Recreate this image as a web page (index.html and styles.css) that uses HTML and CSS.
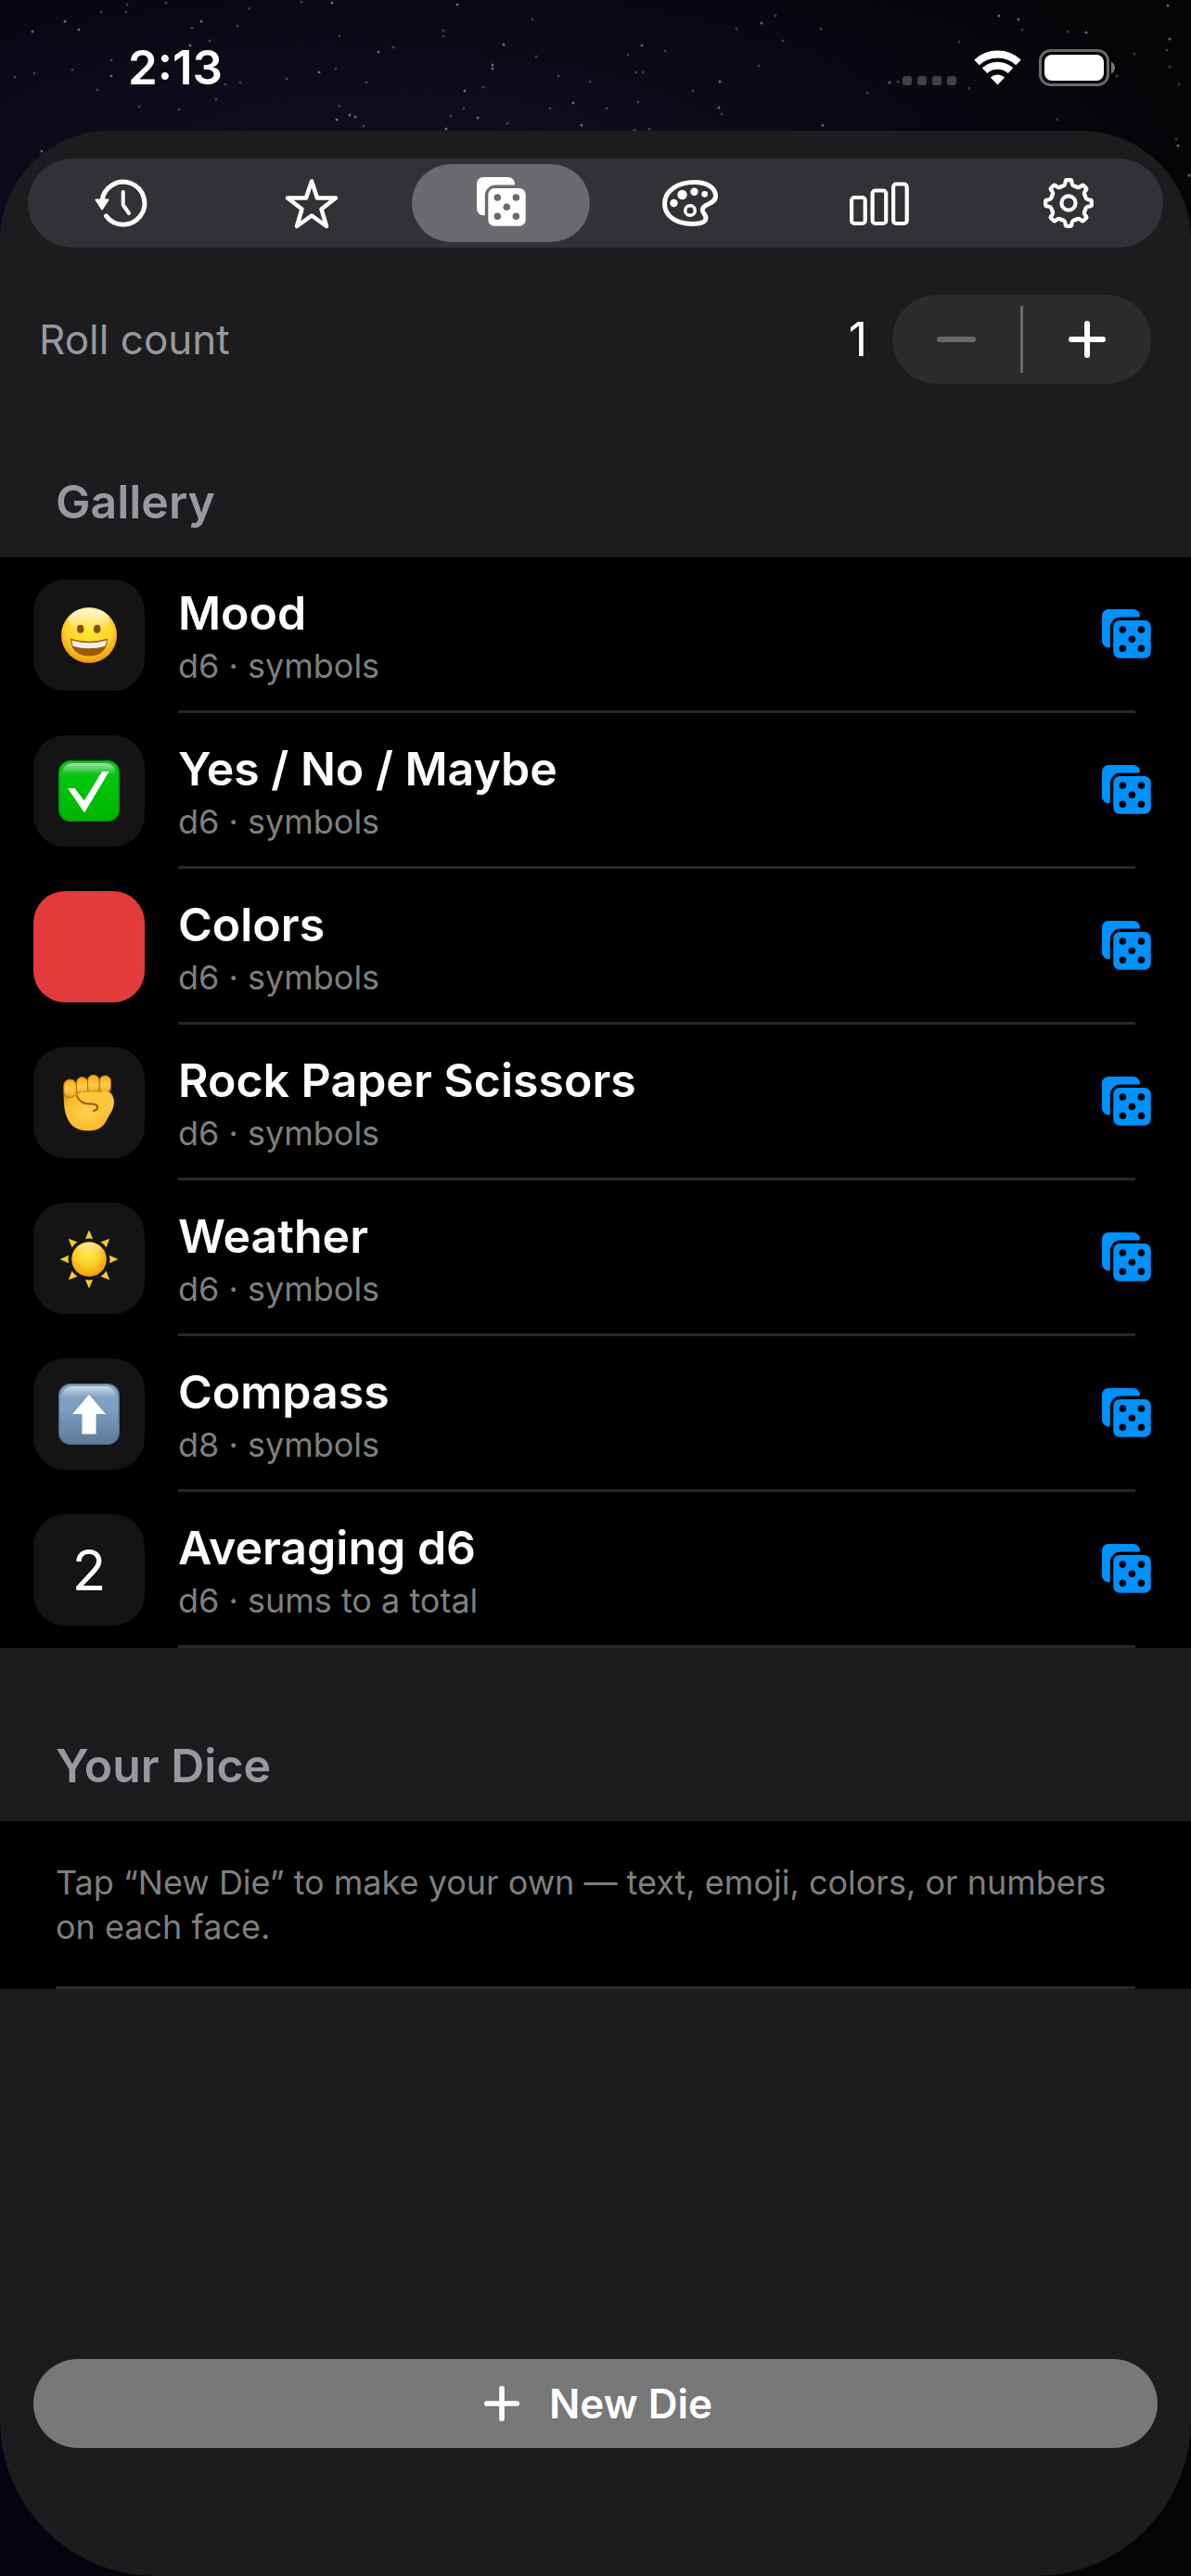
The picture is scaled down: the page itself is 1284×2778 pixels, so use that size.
FILE: index.html
```html
<!DOCTYPE html>
<html lang="en">
<head>
    <meta charset="UTF-8">
    <meta name="viewport" content="width=device-width, initial-scale=1.0">
    <title>Dice</title>
    <link rel="stylesheet" href="styles.css">
</head>
<body>
    <!-- shared shapes -->
    <svg class="defs" aria-hidden="true">
        <symbol id="dice" viewBox="0 0 53 53">
            <path d="M7 0H34a7 7 0 0 1 6.7 8.6H20A11.300 11.300 0 0 0 8.800 20V41A7 7 0 0 1 0 34V7a7 7 0 0 1 7-7Z"/>
            <path fill-rule="evenodd" d="M19 12H46a6.700 6.700 0 0 1 6.700 6.700V46a6.700 6.700 0 0 1-6.700 6.700H19a6.700 6.700 0 0 1-6.700-6.700V18.700A6.700 6.700 0 0 1 19 12ZM18.500 22a3.800 3.800 0 1 0 7.600 0a3.800 3.800 0 1 0-7.600 0ZM38.600 22a3.800 3.800 0 1 0 7.600 0a3.800 3.800 0 1 0-7.600 0ZM28.500 32.200a3.800 3.800 0 1 0 7.600 0a3.800 3.800 0 1 0-7.600 0ZM18.500 42.300a3.800 3.800 0 1 0 7.600 0a3.800 3.800 0 1 0-7.600 0ZM38.600 42.300a3.800 3.800 0 1 0 7.600 0a3.800 3.800 0 1 0-7.600 0Z"/>
        </symbol>
        <symbol id="plus" viewBox="0 0 40 40">
            <path d="M20 3V37M3 20H37" fill="none" stroke="currentColor" stroke-width="6" stroke-linecap="round"/>
        </symbol>
    </svg>

    <!-- night sky -->
    <svg class="sky" aria-hidden="true" fill="#b9b9b0">
        <g opacity=".55">
            <circle cx="35" cy="34" r="1.500"/><circle cx="70" cy="23" r="1.500"/><circle cx="85" cy="32" r="1.500"/><circle cx="217" cy="23" r="1.500"/><circle cx="358" cy="3" r="1.500"/><circle cx="493" cy="5" r="1.500"/><circle cx="205" cy="49" r="1.500"/><circle cx="408" cy="56" r="1.500"/><circle cx="531" cy="70" r="1.500"/><circle cx="531" cy="74" r="1.500"/><circle cx="120" cy="82" r="1.500"/><circle cx="377" cy="124" r="1.500"/><circle cx="363" cy="129" r="1.500"/><circle cx="383" cy="126" r="1.500"/><circle cx="481" cy="139" r="1.500"/><circle cx="515" cy="127" r="1.500"/><circle cx="618" cy="111" r="1.500"/><circle cx="627" cy="135" r="1.500"/><circle cx="543" cy="48" r="1.500"/><circle cx="45" cy="163" r="1.500"/><circle cx="344" cy="78" r="1.500"/><circle cx="501" cy="98" r="1.500"/><circle cx="775" cy="116" r="1.500"/><circle cx="776" cy="88" r="1.500"/><circle cx="821" cy="25" r="1.500"/><circle cx="692" cy="49" r="1.500"/><circle cx="1077" cy="17" r="1.500"/><circle cx="1098" cy="21" r="1.500"/><circle cx="1171" cy="35" r="1.500"/><circle cx="1261" cy="42" r="1.500"/><circle cx="1270" cy="157" r="1.500"/><circle cx="959" cy="89" r="1.500"/><circle cx="887" cy="135" r="1.500"/><circle cx="1259" cy="6" r="1.500"/><circle cx="1282" cy="189" r="1.500"/>
        </g>
        <g opacity=".3">
            <circle cx="179" cy="3" r="1.500"/><circle cx="137" cy="5" r="1.500"/><circle cx="109" cy="13" r="1.500"/><circle cx="136" cy="13" r="1.500"/><circle cx="269" cy="9" r="1.500"/><circle cx="325" cy="2" r="1.500"/><circle cx="207" cy="30" r="1.500"/><circle cx="256" cy="28" r="1.500"/><circle cx="226" cy="44" r="1.500"/><circle cx="366" cy="39" r="1.500"/><circle cx="424" cy="51" r="1.500"/><circle cx="478" cy="33" r="1.500"/><circle cx="478" cy="39" r="1.500"/><circle cx="574" cy="21" r="1.500"/><circle cx="578" cy="61" r="1.500"/><circle cx="602" cy="82" r="1.500"/><circle cx="636" cy="88" r="1.500"/><circle cx="521" cy="94" r="1.500"/><circle cx="395" cy="89" r="1.500"/><circle cx="362" cy="74" r="1.500"/><circle cx="309" cy="85" r="1.500"/><circle cx="259" cy="89" r="1.500"/><circle cx="243" cy="91" r="1.500"/><circle cx="233" cy="107" r="1.500"/><circle cx="366" cy="114" r="1.500"/><circle cx="392" cy="136" r="1.500"/><circle cx="486" cy="125" r="1.500"/><circle cx="500" cy="117" r="1.500"/><circle cx="547" cy="133" r="1.500"/><circle cx="593" cy="117" r="1.500"/><circle cx="16" cy="83" r="1.500"/><circle cx="37" cy="79" r="1.500"/><circle cx="78" cy="75" r="1.500"/><circle cx="105" cy="97" r="1.500"/><circle cx="120" cy="65" r="1.500"/><circle cx="150" cy="115" r="1.500"/><circle cx="193" cy="118" r="1.500"/><circle cx="794" cy="31" r="1.500"/><circle cx="836" cy="17" r="1.500"/><circle cx="844" cy="44" r="1.500"/><circle cx="885" cy="31" r="1.500"/><circle cx="717" cy="55" r="1.500"/><circle cx="677" cy="59" r="1.500"/><circle cx="686" cy="78" r="1.500"/><circle cx="693" cy="78" r="1.500"/><circle cx="818" cy="71" r="1.500"/><circle cx="747" cy="98" r="1.500"/><circle cx="688" cy="110" r="1.500"/><circle cx="654" cy="117" r="1.500"/><circle cx="684" cy="140" r="1.500"/><circle cx="700" cy="139" r="1.500"/><circle cx="778" cy="123" r="1.500"/><circle cx="935" cy="100" r="1.500"/><circle cx="968" cy="88" r="1.500"/><circle cx="1034" cy="45" r="1.500"/><circle cx="1045" cy="95" r="1.500"/><circle cx="1102" cy="32" r="1.500"/><circle cx="1151" cy="34" r="1.500"/><circle cx="1204" cy="82" r="1.500"/><circle cx="1223" cy="58" r="1.500"/><circle cx="1258" cy="54" r="1.500"/><circle cx="1261" cy="72" r="1.500"/><circle cx="1271" cy="91" r="1.500"/><circle cx="1268" cy="150" r="1.500"/><circle cx="1140" cy="129" r="1.500"/>
        </g>
    </svg>

    <header class="status">
        <time class="clock">2:13</time>
        <div class="signals">
            <svg width="58" height="38" viewBox="0 0 58 38" fill="#414044">
                <rect x="0" y="28" width="10" height="10" rx="3"/>
                <rect x="16" y="28" width="10" height="10" rx="3"/>
                <rect x="32" y="28" width="10" height="10" rx="3"/>
                <rect x="48" y="28" width="10" height="10" rx="3"/>
            </svg>
            <svg width="51" height="38" viewBox="0 0 51 38" fill="none" stroke="#fff" stroke-width="8">
                <path d="M3 13.400A33 33 0 0 1 48 13.400"/>
                <path d="M11.500 22.200A20.500 20.500 0 0 1 39.500 22.200"/>
                <path d="M25.500 37.500L17.800 29.400A11.500 11.500 0 0 1 33.200 29.400Z" fill="#fff" stroke="none"/>
            </svg>
            <svg width="83" height="40" viewBox="0 0 83 40">
                <rect x="1.500" y="1.500" width="73" height="37" rx="11" fill="none" stroke="#69696c" stroke-width="3"/>
                <rect x="6" y="6" width="64" height="28" rx="8" fill="#fff"/>
                <path d="M78 13.500Q82 16 82 20T78 26.500Z" fill="#77777a"/>
            </svg>
        </div>
    </header>

    <main class="sheet">
        <nav class="tabs">
            <button class="tab" type="button" aria-label="History">
                <svg class="tab-icon" viewBox="0 0 64 64">
                    <path d="M10 30A23 23 0 1 1 14.500 46" stroke-width="5"/>
                    <path d="M32.700 20V34L39 43" stroke-width="4"/>
                    <path d="M3.500 28.500H16.500L10 38.500Z" fill="currentColor" stroke-width="2"/>
                </svg>
            </button>
            <button class="tab" type="button" aria-label="Favorites">
                <svg class="tab-icon" viewBox="0 0 64 64">
                    <path d="M32 8.500L38 26.500H58L42.500 38.500L48 57L32 45.500L16 57L21.500 38.500L6 26.500H26Z" stroke-width="4.500"/>
                </svg>
            </button>
            <button class="tab active" type="button" aria-label="Dice" aria-pressed="true">
                <svg class="dice-icon"><use href="#dice"/></svg>
            </button>
            <button class="tab" type="button" aria-label="Themes">
                <svg class="tab-icon" viewBox="0 0 64 64">
                    <path d="M37 9.500C50 9.500 59.500 15.500 59.500 24.500C59.500 32 50 32.500 46.500 36.500C42.500 41.500 49.500 43.500 49 48.500C48.500 53 42 54.500 34 54.500C17 54.500 4.500 46 4.500 32.500C4.500 19 18 9.500 37 9.500Z" stroke-width="5"/>
                    <circle cx="32" cy="40" r="5.300" stroke-width="3.500"/>
                    <g fill="currentColor" stroke="none">
                        <circle cx="14.500" cy="32" r="4.200"/>
                        <circle cx="23.500" cy="23" r="5.200"/>
                        <circle cx="36.500" cy="19.700" r="4.200"/>
                        <circle cx="47.700" cy="22.300" r="3.400"/>
                    </g>
                </svg>
            </button>
            <button class="tab" type="button" aria-label="Statistics">
                <svg class="tab-icon" viewBox="0 0 64 64" stroke-width="4.200">
                    <rect x="2.100" y="26" width="14.600" height="28" rx="3"/>
                    <rect x="24.600" y="18.500" width="14.600" height="35.500" rx="3"/>
                    <rect x="47.100" y="11.500" width="14.600" height="42.500" rx="3"/>
                </svg>
            </button>
            <button class="tab" type="button" aria-label="Settings">
                <svg class="tab-icon" viewBox="-32 -32 64 64" stroke-width="4.200">
                    <path id="tooth" d="M-7.500-18L-5.500-18.600Q-4-19.200-3.700-21L-3.200-24Q-3-24.800-2.200-24.800H2.200Q3-24.800 3.200-24L3.700-21Q4-19.200 5.500-18.600L7.500-18"/>
                    <use href="#tooth" transform="rotate(45)"/>
                    <use href="#tooth" transform="rotate(90)"/>
                    <use href="#tooth" transform="rotate(135)"/>
                    <use href="#tooth" transform="rotate(180)"/>
                    <use href="#tooth" transform="rotate(225)"/>
                    <use href="#tooth" transform="rotate(270)"/>
                    <use href="#tooth" transform="rotate(315)"/>
                    <circle r="7.600"/>
                </svg>
            </button>
        </nav>

        <div class="roll">
            <label class="roll-label" for="count">Roll count</label>
            <output class="roll-value" id="count">1</output>
            <div class="stepper">
                <button class="step" type="button" aria-label="Decrease" disabled>
                    <svg width="42" height="6" viewBox="0 0 42 6"><rect width="42" height="6" rx="3" fill="currentColor"/></svg>
                </button>
                <button class="step" type="button" aria-label="Increase">
                    <svg width="40" height="40"><use href="#plus"/></svg>
                </button>
            </div>
        </div>

        <h2 class="heading">Gallery</h2>
        <ul class="list">
            <li class="row">
                <div class="tile">
                    <svg class="emoji" viewBox="0 0 72 72">
                        <defs>
                            <radialGradient id="face" cx=".5" cy=".4" r=".62">
                                <stop offset="0" stop-color="#ffe52e"/>
                                <stop offset=".65" stop-color="#ffd52c"/>
                                <stop offset="1" stop-color="#f08c0c"/>
                            </radialGradient>
                            <linearGradient id="gloss" x2="0" y2="1">
                                <stop offset="0" stop-color="#fff" stop-opacity=".85"/>
                                <stop offset="1" stop-color="#fff" stop-opacity="0"/>
                            </linearGradient>
                        </defs>
                        <circle cx="36" cy="36" r="30" fill="url(#face)"/>
                        <ellipse cx="36" cy="20" rx="22" ry="13" fill="url(#gloss)"/>
                        <ellipse cx="26.700" cy="29.300" rx="3.700" ry="4.500" fill="#8c4a04"/>
                        <ellipse cx="44.700" cy="29.300" rx="3.700" ry="4.500" fill="#8c4a04"/>
                        <path d="M15.700 39.500Q36 46 56.300 39.500Q55 58.500 36 58.500T15.700 39.500Z" fill="#9e5c08"/>
                        <path d="M17 41.500Q36 47 55 41.500Q54.500 46 53 48Q36 52.500 19 48Q17.500 45 17 41.500Z" fill="#eceef2"/>
                    </svg>
                </div>
                <div class="info">
                    <h3 class="name">Mood</h3>
                    <p class="kind">d6 · symbols</p>
                </div>
                <button class="roll-btn" type="button" aria-label="Roll Mood"><svg class="dice-icon"><use href="#dice"/></svg></button>
            </li>
            <li class="row">
                <div class="tile">
                    <svg class="emoji" viewBox="0 0 72 72">
                        <defs>
                            <linearGradient id="green" x2="0" y2="1">
                                <stop offset="0" stop-color="#1fb72b"/>
                                <stop offset=".3" stop-color="#00c70d"/>
                                <stop offset="1" stop-color="#00b300"/>
                            </linearGradient>
                        </defs>
                        <rect x="3" y="3" width="66" height="66" rx="13" fill="#049c0b"/>
                        <rect x="4.500" y="4" width="63" height="63.500" rx="12" fill="url(#green)"/>
                        <path d="M7 18Q8 6 19 6H53Q64 6 65 18Z" fill="url(#gloss)" opacity=".7"/>
                        <path d="M13 33H20.500L30.700 46.500L50 15H57.500L31 59.500Z" fill="#fff"/>
                    </svg>
                </div>
                <div class="info">
                    <h3 class="name">Yes / No / Maybe</h3>
                    <p class="kind">d6 · symbols</p>
                </div>
                <button class="roll-btn" type="button" aria-label="Roll Yes / No / Maybe"><svg class="dice-icon"><use href="#dice"/></svg></button>
            </li>
            <li class="row">
                <div class="tile red"></div>
                <div class="info">
                    <h3 class="name">Colors</h3>
                    <p class="kind">d6 · symbols</p>
                </div>
                <button class="roll-btn" type="button" aria-label="Roll Colors"><svg class="dice-icon"><use href="#dice"/></svg></button>
            </li>
            <li class="row">
                <div class="tile">
                    <svg class="emoji" viewBox="0 0 72 72">
                        <defs>
                            <radialGradient id="skin" cx=".45" cy=".55" r=".6">
                                <stop offset="0" stop-color="#ffd054"/>
                                <stop offset=".7" stop-color="#fbbd2c"/>
                                <stop offset="1" stop-color="#d98608"/>
                            </radialGradient>
                            <linearGradient id="finger" x2="0" y2="1">
                                <stop offset="0" stop-color="#f3a716"/>
                                <stop offset=".5" stop-color="#ffcc47"/>
                                <stop offset="1" stop-color="#eda51c"/>
                            </linearGradient>
                        </defs>
                        <path d="M8.500 22C8.500 42 10 52 18 61Q24 66.500 37 66.500Q49 66 54 57C57 50 63 45 62.800 33Q62 25 54 22Z" fill="url(#skin)"/>
                        <g fill="url(#finger)" stroke="#b96d08" stroke-width="1">
                            <rect x="47" y="7" width="12.500" height="19" rx="6"/>
                            <rect x="34.500" y="6.300" width="12.500" height="20" rx="6"/>
                            <rect x="22.500" y="8.500" width="12" height="20" rx="6"/>
                            <rect x="8.800" y="11" width="13.500" height="19.500" rx="6.500"/>
                        </g>
                        <path d="M22.500 29Q24 24 30 24H52Q62.800 25 62.800 36Q62.500 47 54 51Q43 50 40 44Q46 40 43 38Q30 38 24 33Z" fill="#fdc63d"/>
                        <path d="M23 29Q26 37 36 37.500Q46 37 45 42Q44.500 44 41 45" fill="none" stroke="#9c5705" stroke-width="2" stroke-linecap="round"/>
                        <path d="M22.500 30Q24 24 30 24H50" fill="none" stroke="#d08410" stroke-width="1.200"/>
                    </svg>
                </div>
                <div class="info">
                    <h3 class="name">Rock Paper Scissors</h3>
                    <p class="kind">d6 · symbols</p>
                </div>
                <button class="roll-btn" type="button" aria-label="Roll Rock Paper Scissors"><svg class="dice-icon"><use href="#dice"/></svg></button>
            </li>
            <li class="row">
                <div class="tile">
                    <svg class="emoji" viewBox="-36 -37 72 72">
                        <defs>
                            <radialGradient id="sun" cx=".45" cy=".35" r=".65">
                                <stop offset="0" stop-color="#ffe94a"/>
                                <stop offset=".55" stop-color="#fccb25"/>
                                <stop offset="1" stop-color="#f09a12"/>
                            </radialGradient>
                        </defs>
                        <circle r="18.800" fill="url(#sun)"/>
                        <ellipse cy="-11" rx="13" ry="7" fill="url(#gloss)" opacity=".6"/>
                        <path id="ray" d="M-4.200-21.800Q0-23.300 4.200-21.800L0-31.500Z" fill="#fbcb2b"/>
                        <use href="#ray" transform="rotate(45)"/>
                        <use href="#ray" transform="rotate(90)"/>
                        <use href="#ray" transform="rotate(135)"/>
                        <use href="#ray" transform="rotate(180)"/>
                        <use href="#ray" transform="rotate(225)"/>
                        <use href="#ray" transform="rotate(270)"/>
                        <use href="#ray" transform="rotate(315)"/>
                    </svg>
                </div>
                <div class="info">
                    <h3 class="name">Weather</h3>
                    <p class="kind">d6 · symbols</p>
                </div>
                <button class="roll-btn" type="button" aria-label="Roll Weather"><svg class="dice-icon"><use href="#dice"/></svg></button>
            </li>
            <li class="row">
                <div class="tile">
                    <svg class="emoji" viewBox="0 0 72 72">
                        <defs>
                            <linearGradient id="blue" x2="0" y2="1">
                                <stop offset="0" stop-color="#84a5c3"/>
                                <stop offset=".4" stop-color="#7c9fc2"/>
                                <stop offset="1" stop-color="#5f7c99"/>
                            </linearGradient>
                        </defs>
                        <rect x="3" y="3" width="66" height="66" rx="13" fill="#56728f"/>
                        <rect x="4.500" y="4" width="63" height="63.500" rx="12" fill="url(#blue)"/>
                        <path d="M7 18Q8 6 19 6H53Q64 6 65 18Z" fill="url(#gloss)" opacity=".7"/>
                        <path d="M36 15L54 36H43.500V57.500H28.500V36H18Z" fill="#fff"/>
                    </svg>
                </div>
                <div class="info">
                    <h3 class="name">Compass</h3>
                    <p class="kind">d8 · symbols</p>
                </div>
                <button class="roll-btn" type="button" aria-label="Roll Compass"><svg class="dice-icon"><use href="#dice"/></svg></button>
            </li>
            <li class="row">
                <div class="tile">2</div>
                <div class="info">
                    <h3 class="name">Averaging d6</h3>
                    <p class="kind">d6 · sums to a total</p>
                </div>
                <button class="roll-btn" type="button" aria-label="Roll Averaging d6"><svg class="dice-icon"><use href="#dice"/></svg></button>
            </li>
        </ul>

        <h2 class="heading">Your Dice</h2>
        <div class="empty">
            <p class="hint">Tap “New Die” to make your own — text, emoji, colors, or numbers on each face.</p>
        </div>

        <button class="new-die" type="button">
            <svg width="38" height="38"><use href="#plus"/></svg>
            New Die
        </button>
    </main>
</body>
</html>
```
FILE: styles.css
```css
* {
    box-sizing: border-box;
    margin: 0;
    padding: 0;
}
body {
    display: flex;
    flex-direction: column;
    min-height: 100vh;
    position: relative;
    font-family: Inter, "Liberation Sans", sans-serif;
    color: #fff;
    background:
        radial-gradient(ellipse 900px 260px at 32% 170px, #120e22, transparent),
        linear-gradient(to right, #06040f, #050507);
}
button {
    border: 0;
    background: none;
    color: inherit;
    font-family: inherit;
}
svg {
    display: block;
}
.defs {
    position: absolute;
    width: 0;
    height: 0;
}
.sky {
    position: absolute;
    top: 0;
    left: 0;
    width: 100%;
    height: 280px;
}

/* status bar */
.status {
    display: flex;
    justify-content: space-between;
    align-items: center;
    height: 141px;
    padding: 4px 81px 0 138px;
    position: relative;
}
.clock {
    font-size: 51px;
    font-weight: 600;
    line-height: 60px;
}
.signals {
    display: flex;
    align-items: center;
    gap: 19px;
}

.sheet {
    flex: 1;
    display: flex;
    flex-direction: column;
    position: relative;
    padding: 30px 0 138px;
    background: #1c1c1e;
    border-radius: 118px 118px 168px 168px;
}

/* tab bar */
.tabs {
    display: flex;
    height: 96px;
    margin: 0 30px;
    border-radius: 48px;
    background: #323135;
}
.tab {
    flex: 1;
    display: flex;
    justify-content: center;
    align-items: center;
    margin: 6px;
    border-radius: 42px;
}
.tab.active {
    background: #6a696f;
}
.tab-icon {
    width: 64px;
    height: 64px;
    fill: none;
    stroke: currentColor;
    stroke-linecap: round;
    stroke-linejoin: round;
}
.dice-icon {
    width: 53px;
    height: 53px;
    margin-bottom: 3px;
    fill: currentColor;
}

/* roll count */
.roll {
    display: flex;
    align-items: center;
    margin-top: 51px;
    padding: 0 43px 0 42px;
}
.roll-label {
    flex: 1;
    font-size: 44px;
    color: #98989e;
}
.roll-value {
    margin-right: 27px;
    font-size: 50px;
}
.stepper {
    display: flex;
    width: 279px;
    height: 96px;
    padding: 12px 0;
    border-radius: 48px;
    background: #2c2c2e;
}
.step {
    flex: 1;
    display: flex;
    justify-content: center;
    align-items: center;
}
.step:first-child {
    border-right: 3px solid #68686d;
}
.step:disabled {
    color: #68686d;
}

/* lists */
.heading {
    height: 187px;
    padding: 97px 60px 0;
    font-size: 50px;
    font-weight: 600;
    line-height: 60px;
    color: #98989e;
}
.list {
    list-style: none;
    background: #000;
}
.row {
    display: flex;
    align-items: center;
    gap: 36px;
    height: 168px;
    padding: 0 43px 0 36px;
    background: linear-gradient(#28282a, #28282a) no-repeat 192px 100% / calc(100% - 252px) 3px;
}
.tile {
    display: flex;
    justify-content: center;
    align-items: center;
    width: 120px;
    height: 120px;
    border-radius: 34px;
    background: #141414;
    font-size: 60px;
}
.tile.red {
    background: #e23b3b;
}
.emoji {
    width: 72px;
    height: 72px;
}
.info {
    flex: 1;
    padding-top: 6px;
}
.name {
    font-size: 50px;
    font-weight: 600;
    line-height: 60px;
}
.kind {
    font-size: 36px;
    line-height: 54px;
    color: #7f7f7f;
}
.roll-btn {
    color: #0091ff;
}
.empty {
    padding: 42px 60px 43px;
    background: linear-gradient(#28282a, #28282a) no-repeat 60px 100% / calc(100% - 120px) 3px #000;
}
.hint {
    font-size: 36px;
    line-height: 48px;
    color: #7f7f7f;
}

.new-die {
    display: flex;
    justify-content: center;
    align-items: center;
    gap: 32px;
    height: 96px;
    margin: auto 36px 0;
    padding-left: 6px;
    border-radius: 48px;
    background: #787878;
    font-size: 44px;
    font-weight: 600;
}
```
